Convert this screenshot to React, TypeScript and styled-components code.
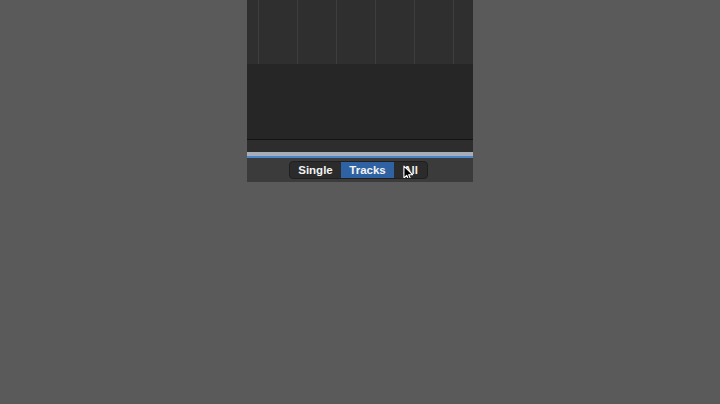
import React from 'react';
import styled, { createGlobalStyle } from 'styled-components';

const GlobalStyle = createGlobalStyle`
  html, body {
    margin: 0;
    padding: 0;
    background: #5a5a5a;
  }
  #root {
    height: 404px;
  }
`;

const Page = styled.div`
  height: 404px;
  display: flex;
  justify-content: center;
  background: #5a5a5a;
`;

const Panel = styled.div`
  width: 226px;
  display: flex;
  flex-direction: column;
  align-self: flex-start;
  background: #5c5c5c;
`;

const TrackGrid = styled.div`
  height: 64px;
  background-color: #2f2f2f;
  background-image: repeating-linear-gradient(
    to right,
    #3d3d3d 0,
    #3d3d3d 1px,
    transparent 1px,
    transparent 39px
  );
  background-position: 11px 0;
`;

const EmptyArea = styled.div`
  height: 75px;
  background: #262626;
  border-bottom: 1px solid #141414;
`;

const LowerBand = styled.div`
  height: 12px;
  background: #2d2d2d;
`;

const Divider = styled.div`
  height: 4px;
  background: #a7aeb7;
  border-bottom: 2px solid #4a86cc;
`;

const Toolbar = styled.div`
  height: 24px;
  background: #3b3b3b;
  display: flex;
  align-items: center;
  padding-left: 42px;
`;

const Segmented = styled.div`
  display: flex;
  height: 18px;
  background: #2b2b2b;
  border: 1px solid #1f1f1f;
  border-radius: 4px;
  box-sizing: border-box;
  overflow: hidden;
  position: relative;
`;

const Segment = styled.div<{ $active?: boolean; $w: number }>`
  width: ${({ $w }) => $w}px;
  display: flex;
  align-items: center;
  justify-content: center;
  font-family: 'Liberation Sans', Arial, sans-serif;
  font-weight: bold;
  font-size: 11.5px;
  color: #f2f2f2;
  background: ${({ $active }) => ($active ? '#2f62a3' : 'transparent')};
`;

const Cursor = styled.svg`
  position: absolute;
  left: 113px;
  top: 3px;
  width: 11px;
  height: 17px;
`;

const App: React.FC = () => {
  return (
    <>
      <GlobalStyle />
      <Page>
        <Panel>
          <TrackGrid />
          <EmptyArea />
          <LowerBand />
          <Divider />
          <Toolbar>
            <Segmented>
              <Segment $w={51}>Single</Segment>
              <Segment $w={53} $active>
                Tracks
              </Segment>
              <Segment $w={33}>All</Segment>
              <Cursor viewBox="0 0 12 18">
                <path
                  d="M1 1 L1 14 L4 11 L6.5 16.5 L8.5 15.6 L6.2 10.3 L10.5 10.3 Z"
                  fill="#000"
                  stroke="#fff"
                  strokeWidth="1.2"
                  strokeLinejoin="round"
                />
              </Cursor>
            </Segmented>
          </Toolbar>
        </Panel>
      </Page>
    </>
  );
};

export default App;
